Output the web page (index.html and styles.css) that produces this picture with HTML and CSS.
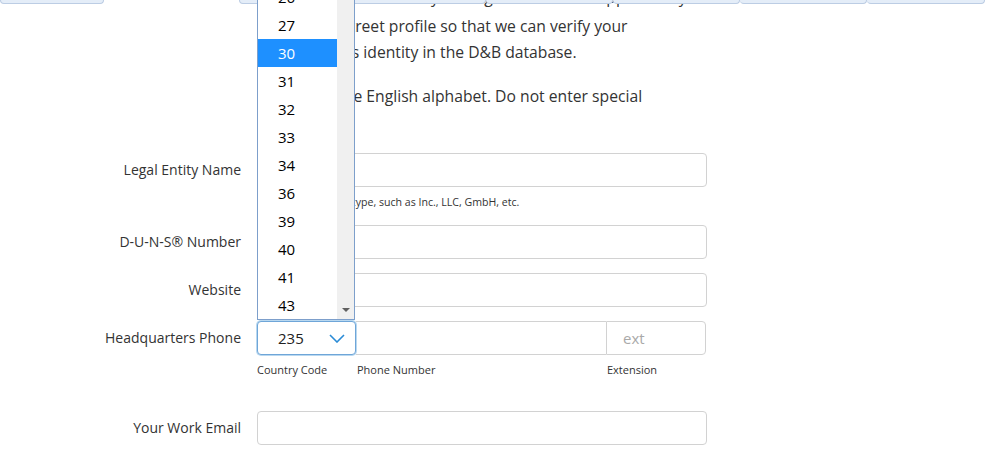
FILE: index.html
```html
<!DOCTYPE html>
<html lang="en">
<head>
<meta charset="utf-8">
<title>Enrollment — Organization Information</title>
<link rel="stylesheet" href="styles.css">
</head>
<body>
<nav class="tabs">
  <span class="tab"></span>
  <span class="tab tab--active"></span>
  <span class="tab"></span>
  <span class="tab tab--joined"></span>
  <span class="tab tab--joined"></span>
  <span class="tab tab--joined"></span>
  <span class="tab tab--joined"></span>
</nav>

<main class="content">
  <div class="intro">
    <p class="intro__p intro__p--lead">Enter the legal name of your organization as it appears in your</p>
    <p class="intro__p intro__p--first">Dun &amp; Bradstreet profile so that we can verify your<br>organization's identity in the D&amp;B database.</p>
    <p class="intro__p">Please use the English alphabet. Do not enter special<br>characters.</p>
  </div>

  <form class="form">
    <div class="row row--hint">
      <label class="row__label">Legal Entity Name</label>
      <div class="row__field">
        <input class="input" type="text">
        <div class="hint">Include your entity type, such as Inc., LLC, GmbH, etc.</div>
      </div>
    </div>

    <div class="row">
      <label class="row__label">D-U-N-S® Number</label>
      <div class="row__field"><input class="input" type="text"></div>
    </div>

    <div class="row">
      <label class="row__label">Website</label>
      <div class="row__field"><input class="input" type="text"></div>
    </div>

    <div class="row row--phone">
      <label class="row__label">Headquarters Phone</label>
      <div class="row__field">
        <div class="phone">
          <div class="cc">
            <div class="listbox">
              <ul class="listbox__items">
                <li class="listbox__item">26</li>
                <li class="listbox__item">27</li>
                <li class="listbox__item listbox__item--selected">30</li>
                <li class="listbox__item">31</li>
                <li class="listbox__item">32</li>
                <li class="listbox__item">33</li>
                <li class="listbox__item">34</li>
                <li class="listbox__item">36</li>
                <li class="listbox__item">39</li>
                <li class="listbox__item">40</li>
                <li class="listbox__item">41</li>
                <li class="listbox__item">43</li>
              </ul>
              <span class="listbox__bar"><span class="listbox__arrow"></span></span>
            </div>
            <div class="cc__select">
              <span>235</span>
              <svg class="cc__chevron" width="16" height="9" viewBox="0 0 16 9"><path d="M1 1 L8 8 L15 1" fill="none" stroke="#2a8bd6" stroke-width="1.6"/></svg>
            </div>
          </div>
          <input class="phone__num" type="text">
          <input class="phone__ext" type="text" placeholder="ext">
        </div>
        <div class="phone__labels">
          <span>Country Code</span>
          <span>Phone Number</span>
          <span>Extension</span>
        </div>
      </div>
    </div>

    <div class="row">
      <label class="row__label">Your Work Email</label>
      <div class="row__field"><input class="input" type="email"></div>
    </div>
  </form>
</main>
</body>
</html>
```

FILE: styles.css
```css
* { box-sizing: border-box; }

html, body {
  margin: 0;
  height: 100%;
  overflow: hidden;
  background: #fff;
}

body {
  font-family: "Open Sans", "Noto Sans", sans-serif;
  color: #333;
}

/* Step tabs, pinned to the top and mostly scrolled away */
.tabs {
  position: fixed;
  top: -26px;
  left: 0;
  right: 0;
  display: flex;
  height: 30px;
  z-index: 10;
}

.tab {
  height: 30px;
  background: #e4edf8;
  border: 1px solid #bccde4;
  border-top: none;
  border-radius: 0 0 4px 4px;
}

.tab:nth-child(1) { width: 104px; }
.tab:nth-child(2) { width: 135px; }
.tab:nth-child(3) { width: 247px; }
.tab:nth-child(4),
.tab:nth-child(5),
.tab:nth-child(6) { width: 127px; }
.tab:nth-child(7) { flex: 1; }

.tab--active {
  background: #fff;
  border-color: transparent;
}

.tab--joined { border-left: none; }

/* Page content */
.content {
  width: 707px;
  margin-top: -16px;
}

.intro {
  margin-left: 257px;
  width: 450px;
  font-size: 15.7px;
  line-height: 26px;
}

.intro__p { margin: 0; white-space: nowrap; }
.intro__p--lead { margin-bottom: 3px; }
.intro__p--first { margin-bottom: 18px; }

.form {
  margin-top: 18px;
  display: flex;
  flex-direction: column;
  gap: 14px;
}

.row {
  display: grid;
  grid-template-columns: 241px 450px;
  column-gap: 16px;
  align-items: start;
}

.row--hint { margin-bottom: 2px; }
.row--phone { margin-bottom: 20px; }

.row__label {
  text-align: right;
  font-size: 14px;
  line-height: 34px;
  color: #333;
  white-space: nowrap;
}

.input {
  display: block;
  width: 450px;
  height: 34px;
  border: 1px solid #d2d2d2;
  border-radius: 4px;
  background: #fff;
  font: inherit;
  padding: 0 10px;
}

.hint {
  margin-top: 8px;
  font-size: 10.6px;
  line-height: 14px;
  color: #333;
}

/* Phone group */
.phone {
  display: flex;
  width: 449px;
}

.cc {
  position: relative;
  width: 99px;
  flex: none;
}

.cc__select {
  height: 34px;
  display: flex;
  align-items: center;
  justify-content: space-between;
  padding: 0 10px 0 20px;
  border: 1px solid #6fa6d8;
  box-shadow: 0 0 0 1px #b9d8f0;
  border-radius: 4px;
  font-size: 15px;
  color: #222;
  background: #fff;
}

.cc__chevron { display: block; margin-top: 1px; }

.phone__num,
.phone__ext {
  height: 34px;
  border: 1px solid #d2d2d2;
  background: #fff;
  font: inherit;
}

.phone__num {
  width: 250px;
  border-left: none;
  border-right: none;
}

.phone__ext {
  width: 100px;
  border-radius: 0 4px 4px 0;
  padding: 0 16px;
  font-size: 15px;
}

.phone__ext::placeholder { color: #a9a9a9; }

.phone__labels {
  display: grid;
  grid-template-columns: 100px 250px 100px;
  margin-top: 8px;
  font-size: 11px;
  line-height: 14px;
  color: #333;
}

/* Open country-code list, drawn above the select */
.listbox {
  position: absolute;
  left: 0;
  bottom: calc(100% + 1px);
  width: 98px;
  background: #fff;
  border: 1px solid #7d9fcb;
  z-index: 20;
}

.listbox__items {
  margin: 0;
  padding: 0 17px 0 0;
  list-style: none;
}

.listbox__item {
  height: 28px;
  line-height: 28px;
  padding-left: 20px;
  font-size: 15px;
  color: #000;
}

.listbox__item--selected {
  background: #1e90ff;
  color: #fff;
}

.listbox__bar {
  position: absolute;
  top: 0;
  right: 0;
  bottom: 0;
  width: 17px;
  background: #f0f0f0;
}

.listbox__arrow {
  position: absolute;
  left: 5px;
  bottom: 7px;
  width: 0;
  height: 0;
  border-left: 4px solid transparent;
  border-right: 4px solid transparent;
  border-top: 4px solid #606060;
}
```
